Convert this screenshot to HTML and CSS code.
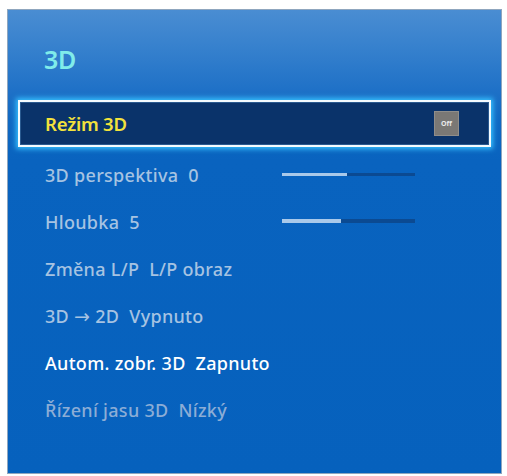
FILE: index.html
```html
<!DOCTYPE html>
<html lang="cs">
<head>
<meta charset="utf-8">
<title>3D</title>
<link rel="stylesheet" href="styles.css">
</head>
<body>
<div class="panel">
  <div class="header">
    <h1 class="title">3D</h1>
  </div>
  <div class="selected">
    <span class="sel-label">Režim 3D</span>
    <span class="off-badge">Off</span>
  </div>
  <ul class="menu">
    <li class="row">
      <span class="label">3D perspektiva&nbsp; 0</span>
      <span class="slider"><span class="fill" style="width:49%"></span></span>
    </li>
    <li class="row">
      <span class="label">Hloubka&nbsp; 5</span>
      <span class="slider thick"><span class="fill" style="width:44%"></span></span>
    </li>
    <li class="row"><span class="label">Změna L/P&nbsp; L/P obraz</span></li>
    <li class="row"><span class="label">3D <span class="arrow">→</span> 2D&nbsp; Vypnuto</span></li>
    <li class="row active"><span class="label">Autom. zobr. 3D&nbsp; Zapnuto</span></li>
    <li class="row dim"><span class="label">Řízení jasu 3D&nbsp; Nízký</span></li>
  </ul>
</div>
</body>
</html>
```

FILE: styles.css
```css
* { box-sizing: border-box; }
html, body { margin: 0; padding: 0; background: #ffffff; }
body {
  font-family: "Noto Sans", "Open Sans", sans-serif;
  width: 507px;
  height: 476px;
  overflow: hidden;
}
.panel {
  margin: 9px 0 0 7px;
  width: 495px;
  height: 465px;
  border: 1px solid #8fa6be;
  background: linear-gradient(to bottom,
    #4a8dd2 0px,
    #3580cd 40px,
    #1f71c7 80px,
    #1169c3 110px,
    #0963bf 150px,
    #0661bd 100%);
  padding: 0 10px;
}
.header {
  height: 90px;
  display: flex;
  align-items: center;
  padding: 0 0 0 26px;
}
.title {
  margin: 0;
  font-size: 25px;
  font-weight: 600;
  color: #80ecea;
  letter-spacing: -0.3px;
  padding-top: 8px;
}
.selected {
  height: 47px;
  border: 2px solid #f4fbff;
  background: #0a336a;
  box-shadow: 0 0 5px 2px #36c0ff, inset 0 0 0 1px #2a5a90;
  display: flex;
  align-items: center;
  justify-content: space-between;
  padding: 0 30px 0 25px;
}
.sel-label {
  color: #f2e23c;
  font-size: 18.5px;
  font-weight: 600;
  letter-spacing: -0.2px;
}
.off-badge {
  width: 25px;
  height: 25px;
  background: #7a7875;
  border: 1px solid #8f8d8a;
  color: #e8e8e8;
  font-size: 7px;
  font-weight: 700;
  display: flex;
  align-items: center;
  justify-content: center;
}
.menu {
  list-style: none;
  margin: 4px 0 0;
  padding: 0;
}
.row {
  height: 47px;
  display: flex;
  align-items: center;
  padding-left: 27px;
}
.label {
  width: 237px;
  color: #a6c3e2;
  font-size: 18px;
  font-weight: 500;
  letter-spacing: 0.3px;
  white-space: nowrap;
}
.arrow {
  font-family: "DejaVu Sans", sans-serif;
  font-size: 19px;
}
.row.active .label { color: #ffffff; }
.row.dim .label { color: #8cadd6; }
.slider {
  width: 133px;
  height: 3px;
  background: #0b4a92;
  display: block;
  margin-top: -1px;
}
.slider.thick { height: 4px; }
.fill {
  display: block;
  height: 100%;
  background: #a9c9ea;
}
```
